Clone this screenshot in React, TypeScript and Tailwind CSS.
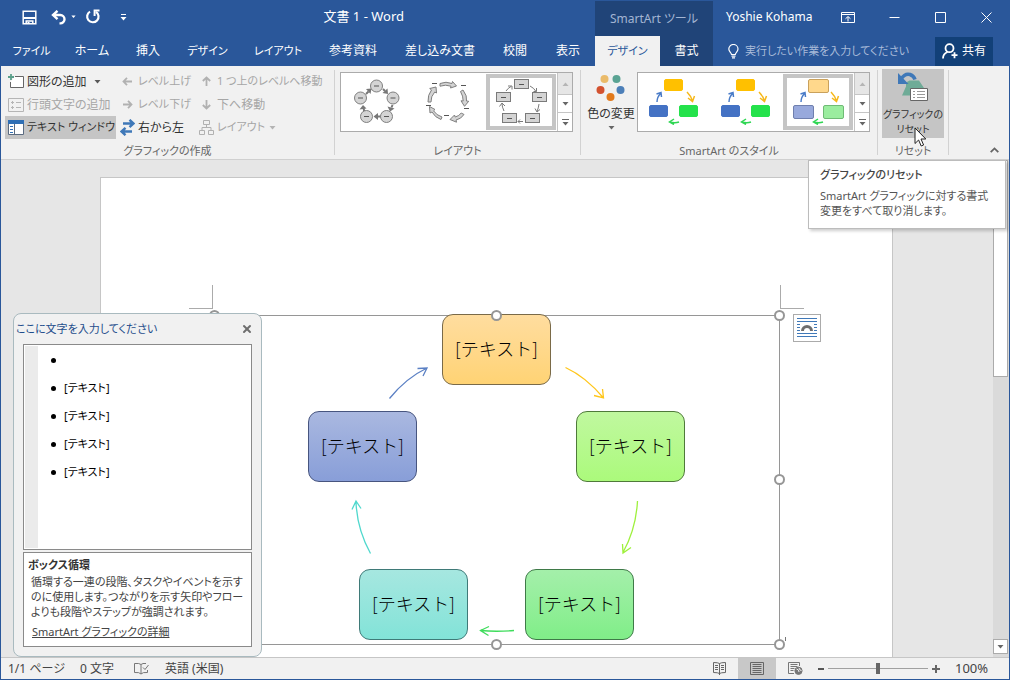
import React, { useState } from 'react';
import { X } from 'lucide-react';
import clsx from 'clsx';

const MAIN_TABS = ['ファイル', 'ホーム', '挿入', 'デザイン', 'レイアウト', '参考資料', '差し込み文書', '校閲', '表示'];
const WIDE_TABS = ['ファイル', 'デザイン', 'レイアウト'];

function Caret({ className }: { className?: string }) {
  return (
    <svg width="7" height="4" viewBox="0 0 7 4" className={clsx('shrink-0', className)} fill="currentColor">
      <path d="M0.5 0h6L3.5 3.5z" />
    </svg>
  );
}

/* ---------- title bar and tabs ---------- */

function QuickAccess() {
  return (
    <div className="flex items-center">
      <button aria-label="上書き保存" className="mr-[14px]">
        <svg width="15" height="15" viewBox="0 0 15 15" fill="none" stroke="#fff" strokeWidth="1.500">
          <path d="M1.200 1.200h12.600v12.600H1.200z" />
          <path d="M1 8h13" strokeWidth="2" />
          <path d="M4.200 14v-3h6.600v3" />
          <path d="M6.500 12V14" strokeWidth="2" />
        </svg>
      </button>
      <button aria-label="元に戻す" className="flex items-center gap-1 mr-[9px]">
        <svg width="16" height="15" viewBox="0 0 16 15" fill="none" stroke="#fff" strokeWidth="2.400">
          <path d="M6.500 0.800L2 5l4.500 4.200" />
          <path d="M2.500 5h6.800a4.200 4.200 0 0 1 0 8.400H8.500" />
        </svg>
        <Caret className="w-[5px]" />
      </button>
      <button aria-label="やり直し" className="mr-[19px]">
        <svg width="16" height="16" viewBox="0 0 16 16" fill="none" stroke="#fff" strokeWidth="2.200">
          <path d="M5 2.600a5.700 5.700 0 1 0 6 0.200" />
          <path d="M14.500 1.600H9.600v5.400" strokeWidth="2" />
        </svg>
      </button>
      <button aria-label="クイック アクセス ツール バーのユーザー設定">
        <svg width="7" height="7" viewBox="0 0 7 7" fill="currentColor">
          <path d="M1 0h5v1H1zM0.500 3h6L3.500 6.500z" />
        </svg>
      </button>
    </div>
  );
}

function Header() {
  const [query, setQuery] = useState('');
  return (
    <header className="flex bg-[#2a579a] text-white">
      <div className="w-[594px] shrink-0">
        <div className="h-[35px] flex items-center justify-between pb-[3px] pl-[21px] pr-[191px]">
          <QuickAccess />
          <h1 className="text-[13px]">文書 1 - Word</h1>
        </div>
        <nav className="h-[30px] grid grid-cols-[61px_60px_52px_67px_74px_76px_98px_52px_54px] items-center text-center">
          {MAIN_TABS.map(tab => (
            <button key={tab} className={clsx('whitespace-nowrap', WIDE_TABS.includes(tab) && 'text-[11px]')}>{tab}</button>
          ))}
        </nav>
      </div>
      <div className="w-[118px] shrink-0 bg-[#204478]">
        <div className="h-[35px] flex items-center justify-center text-[#a3b5d3]">SmartArt ツール</div>
        <nav className="h-[30px] grid grid-cols-[65px_53px]">
          <button className="bg-[#f1f1f1] text-[#2a579a] text-[11px]">デザイン</button>
          <button>書式</button>
        </nav>
      </div>
      <div className="flex-1 min-w-0">
        <div className="h-[35px] flex items-center pb-[3px] pl-[13px]">
          <span className="whitespace-nowrap">Yoshie Kohama</span>
          <div className="ml-auto flex items-center">
            <button aria-label="リボンの表示オプション" className="w-[46px] flex justify-center">
              <svg width="14" height="11" viewBox="0 0 14 11" fill="none" stroke="#fff">
                <path d="M0.500 0.500h13v10H0.500zM0.500 2.500h13M7 9.500V5M4.500 6.800L7 4.500l2.500 2.300" />
              </svg>
            </button>
            <button aria-label="最小化" className="w-[46px] flex justify-center">
              <svg width="11" height="11" viewBox="0 0 11 11" stroke="#fff"><path d="M0.500 5.500h10" /></svg>
            </button>
            <button aria-label="最大化" className="w-[46px] flex justify-center">
              <svg width="11" height="11" viewBox="0 0 11 11" fill="none" stroke="#fff"><path d="M0.500 0.500h10v10H0.500z" /></svg>
            </button>
            <button aria-label="閉じる" className="w-[46px] flex justify-center">
              <svg width="11" height="11" viewBox="0 0 11 11" stroke="#fff"><path d="M0.500 0.500l10 10M10.500 0.500l-10 10" /></svg>
            </button>
          </div>
        </div>
        <div className="h-[30px] flex items-center pl-[15px] pr-4">
          <svg width="11" height="15" viewBox="0 0 11 15" fill="none" stroke="#fff" strokeWidth="1.200" className="shrink-0">
            <path d="M3.500 10.500c0-2-2.700-2.600-2.700-5.400a4.600 4.600 0 0 1 9.200 0c0 2.800-2.700 3.400-2.700 5.400z" />
            <path d="M3.500 12.200h4M4 13.900h3" />
          </svg>
          <input
            aria-label="操作アシスト"
            value={query}
            onChange={e => setQuery(e.target.value)}
            placeholder="実行したい作業を入力してください"
            className="ml-[6px] w-full min-w-0 text-[11px] bg-transparent outline-none placeholder:text-[#a9bbd9]"
          />
          <button className="flex items-center justify-center gap-1 w-[58px] h-[29px] shrink-0 bg-[#124078] whitespace-nowrap">
            <svg width="16" height="16" viewBox="0 0 16 16" fill="none" stroke="#fff" strokeWidth="1.800">
              <circle cx="7.500" cy="5.200" r="4" />
              <path d="M1 15.500c0-3.500 1.800-5.500 4.500-6.500M9.500 12.200h6M12.500 9.200v6" />
            </svg>
            共有
          </button>
        </div>
      </div>
    </header>
  );
}

/* ---------- ribbon ---------- */

interface SmallButtonProps {
  icon: React.ReactNode;
  label: string;
  disabled?: boolean;
  active?: boolean;
  menu?: boolean;
  compact?: boolean;
}

function SmallButton({ icon, label, disabled, active, menu, compact }: SmallButtonProps) {
  return (
    <button
      disabled={disabled}
      className={clsx(
        'flex items-center h-[23px] pl-[3px] whitespace-nowrap',
        disabled ? 'text-[#a6a6a6]' : 'text-[#333]',
        active && 'bg-[#c5c5c5]',
        compact && 'text-[11px]'
      )}
    >
      <span className="w-4 mr-[3px] flex justify-center shrink-0">{icon}</span>
      {label}
      {menu && <Caret className={clsx('opacity-80', compact ? 'ml-1' : 'ml-[7px]')} />}
    </button>
  );
}

function ArrowIcon({ turn }: { turn: string }) {
  return (
    <svg width="11" height="11" viewBox="0 0 11 11" fill="none" stroke="#b1b1b1" strokeWidth="1.800" className={turn}>
      <path d="M1.500 5.500H10M5 1.800L1.500 5.500 5 9.200" />
    </svg>
  );
}

const addShapeIcon = (
  <svg width="16" height="15" viewBox="0 0 16 15" fill="none">
    <path d="M7 2.500h8.500v11H2.500V8" stroke="#666" fill="#fff" />
    <path d="M3 0v6M0 3h6" stroke="#5a9f8a" strokeWidth="1.800" />
  </svg>
);

const addBulletIcon = (
  <svg width="16" height="14" viewBox="0 0 16 14" fill="none" stroke="#b5b5b5">
    <path d="M0.500 0.500h15v13H0.500z" />
    <path d="M3 4.500h3M4.500 3v3M8 4.500h5M3 9.500h3M4.500 8v3M8 9.500h5" />
  </svg>
);

const textPaneIcon = (
  <svg width="16" height="15" viewBox="0 0 16 15">
    <path d="M0.500 0.500h15v14H0.500z" fill="#fff" stroke="#5b6b80" />
    <path d="M0 0h16v4H0z" fill="#2f6fb5" />
    <path d="M6.500 4v11" stroke="#5b6b80" />
    <path d="M2 6.500h3M2 9.500h3M2 12.500h3" stroke="#2f6fb5" />
  </svg>
);

const rightToLeftIcon = (
  <svg width="15" height="17" viewBox="0 0 15 17" fill="none" stroke="#3f78b8" strokeWidth="2.400">
    <path d="M3 4.500h10M9.500 0.800l4 3.700-4 3.700" />
    <path d="M12 12.500H2M5.500 8.800l-4 3.700 4 3.700" />
  </svg>
);

const hierarchyIcon = (
  <svg width="15" height="15" viewBox="0 0 15 15" fill="none" stroke="#b1b1b1">
    <path d="M4.500 0.500h6v4h-6zM0.500 10.500h5v4h-5zM9.500 10.500h5v4h-5zM7.500 4.500v3M3 10.500v-3h9v3" />
  </svg>
);

interface RibbonGroupProps {
  label: string;
  className: string;
  children: React.ReactNode;
}

function RibbonGroup({ label, className, children }: RibbonGroupProps) {
  return (
    <section className={clsx('flex flex-col my-1 border-r border-[#d2d2d2] shrink-0', className)}>
      <div className="flex-1">{children}</div>
      <h2 className="text-center text-[11px] text-[#666] leading-4 h-3">{label}</h2>
    </section>
  );
}

function Gallery({ items, selected, label }: { items: React.ReactNode[]; selected: number; label: string }) {
  return (
    <div className="flex w-[233px] h-[60px] bg-white border border-[#ababab]" role="group" aria-label={label}>
      {items.map((item, i) => (
        <button
          key={i}
          aria-label={`${label} ${i + 1}`}
          aria-pressed={i === selected}
          className={clsx(
            'flex-1 flex items-center justify-center border-4 m-px',
            i === selected ? 'border-[#c5c5c5]' : 'border-transparent'
          )}
        >
          {item}
        </button>
      ))}
      <div className="w-[15px] grid grid-rows-[21px_19px_18px] border-l border-[#c5c5c5] text-[#666]">
        <button aria-label="前へ" disabled className="flex items-center justify-center bg-[#e6e6e6] text-[#b5b5b5]">
          <Caret className="rotate-180" />
        </button>
        <button aria-label="次へ" className="flex items-center justify-center border-y border-[#c5c5c5]">
          <Caret />
        </button>
        <button aria-label="その他" className="flex items-center justify-center">
          <svg width="7" height="7" viewBox="0 0 7 7" fill="currentColor"><path d="M0 0h7v1H0zM0.500 3h6L3.500 6.500z" /></svg>
        </button>
      </div>
    </div>
  );
}

function CircleCycle() {
  const nodes = [[22.5, 7], [39, 19], [32.5, 37.5], [12.5, 37.5], [6.5, 19]];
  return (
    <svg width="46" height="46" viewBox="0 0 46 46" className="shrink-0" stroke="#7f7f7f">
      {nodes.map(([x, y]) => (
        <g key={`${x}-${y}`}>
          <circle cx={x} cy={y} r="6" fill="#d4d4d4" />
          <path d={`M${x - 2.5} ${y}h5`} stroke="#555" />
        </g>
      ))}
      <g fill="#777" stroke="none">
        <path d="M34 15l-0.500-5.500-5 4.500z" />
        <path d="M36 32.500l-2.500-5 7 2z" />
        <path d="M19.500 37.500l4.500-3.500v7z" />
        <path d="M9 26l-3.500 4.500 7-1z" />
        <path d="M17.500 9.500l-5.500 0.500 4.500 5z" />
      </g>
      <path d="M29 10l2 2M38.500 26l-1 2.500M26.500 37.500h-3M9.500 29l0.700 3M12 15l2.500-2.500" stroke="#777" strokeWidth="2" />
    </svg>
  );
}

function ArrowCycle() {
  return (
    <svg width="46" height="44" viewBox="0 0 46 44" className="shrink-0" fill="#d4d4d4" stroke="#7f7f7f">
      <path d="M14 3.500q6-2.500 12 0l0.500-2 4 4.500-6 2 0.500-1.800q-5.500-2-11 0z" />
      <path d="M37 10q4.500 6 3.500 11l2.200 0.300-4.200 5-3.500-5.500 2.200 0.200q0-5-2.700-9.500z" />
      <path d="M38 34.500q-3 4.500-8 5.500l0.500 2.200-6.500-2.700 4.500-4.500 0.700 2q4-1 6-4z" />
      <path d="M15 39.500q-6-2-9-7.500l-2 1-0.500-6.500 5.500 3-1.500 1.300q3 4.500 8.500 6.200z" />
      <path d="M2 22q-0.500-7 3.500-12l-1.800-1.500 6.300-1.500 0.500 6-1.800-1q-4 4.500-3.700 10z" />
      <path d="M6 3.500h5M35 5.500h5M38 28.500h5M18 35.500h5M0 25.500h5" stroke="#555" />
    </svg>
  );
}

function BoxCycle() {
  const boxes = [[19, 0], [37, 13], [30, 34], [7, 34], [1, 13]];
  return (
    <svg width="53" height="46" viewBox="0 0 53 46" className="shrink-0" stroke="#7a7a7a" fill="none">
      {boxes.map(([x, y]) => (
        <g key={`${x}-${y}`}>
          <rect x={x + 0.5} y={y + 0.5} width="14" height="9" fill="#d4d4d4" />
          <path d={`M${x + 5} ${y + 5.5}h5`} stroke="#555" />
        </g>
      ))}
      <path d="M11 12q2-3 5-4.500M13 7h4v3.500M35 7q4 2 6 5.500M38.500 12.500h3V9M44 25q-0.500 4-2 7.500M40 29.500l2 3.500 3-2.500M28 42.500h-5M25 40.500l-2 2 2 2M9 32q-2-4-2-7.500M4.500 27.500L7 24l3 3" />
    </svg>
  );
}

function StyleThumb({ variant }: { variant: 'flat' | 'subtle' | 'soft' }) {
  const soft = variant === 'soft';
  const fills = soft ? ['#ffd88c', '#98a9dc', '#9bed9f'] : ['#ffc000', '#4472c4', '#24e24b'];
  const strokes = soft ? ['#c9a15c', '#6f7fae', '#6fbb75'] : fills;
  return (
    <svg width="54" height="46" viewBox="0 0 54 46" className="shrink-0" fill="none">
      <rect x="17.500" y="0.500" width={soft ? 20 : 18} height={soft ? 13 : 11} rx="1.500" fill={fills[0]} stroke={strokes[0]} />
      <rect x="2.500" y="26.500" width={soft ? 20 : 18} height={soft ? 13 : 11} rx="1.500" fill={fills[1]} stroke={strokes[1]} />
      <rect x="32.500" y="26.500" width={soft ? 20 : 18} height={soft ? 13 : 11} rx="1.500" fill={fills[2]} stroke={strokes[2]} />
      <path d="M10 23q0-5 4-9M9.500 15l4.500-1.500 0.500 4.500" stroke="#4a7cc8" strokeWidth="1.500" />
      <path d="M40 13q4 4 5.500 9M41 19l4.500 3.500 2-5.500" stroke="#f6b81a" strokeWidth="1.500" />
      <path d="M32 43q-4 1.500-9 0M27 40l-4.500 3 4.500 2.500" stroke="#2fd653" strokeWidth="1.500" />
    </svg>
  );
}

function Ribbon() {
  return (
    <div className="flex h-[94px] shrink-0 bg-[#f1f1f1] border-b border-[#d0d0d0]">
      <RibbonGroup label="グラフィックの作成" className="w-[334px]">
        <div className="grid grid-cols-[111px_79px_1fr] pl-1">
          <SmallButton icon={addShapeIcon} label="図形の追加" menu />
          <SmallButton icon={<ArrowIcon turn="rotate-0" />} label="レベル上げ" disabled compact />
          <SmallButton icon={<ArrowIcon turn="rotate-90" />} label="1 つ上のレベルへ移動" disabled compact />
          <SmallButton icon={addBulletIcon} label="行頭文字の追加" disabled />
          <SmallButton icon={<ArrowIcon turn="rotate-180" />} label="レベル下げ" disabled compact />
          <SmallButton icon={<ArrowIcon turn="-rotate-90" />} label="下へ移動" disabled />
          <SmallButton icon={textPaneIcon} label="テキスト ウィンドウ" active compact />
          <SmallButton icon={rightToLeftIcon} label="右から左" />
          <SmallButton icon={hierarchyIcon} label="レイアウト" disabled menu compact />
        </div>
      </RibbonGroup>

      <RibbonGroup label="レイアウト" className="w-[246px]">
        <div className="pt-[2px] pl-[5px]">
          <Gallery label="レイアウト" selected={2} items={[<CircleCycle />, <ArrowCycle />, <BoxCycle />]} />
        </div>
      </RibbonGroup>

      <RibbonGroup label="SmartArt のスタイル" className="w-[297px]">
        <div className="flex pt-[2px] pl-1">
          <button className="w-[52px] flex flex-col items-center text-[#333] whitespace-nowrap">
            <svg width="30" height="30" viewBox="0 0 30 30">
              <circle cx="8.500" cy="7" r="4" fill="#eabb6a" />
              <circle cx="20.500" cy="7" r="4" fill="#5aa393" />
              <circle cx="4.500" cy="18" r="4" fill="#d35230" />
              <circle cx="24.500" cy="18" r="4" fill="#4c7fb8" />
              <circle cx="14.500" cy="25" r="4" fill="#e27a1c" />
            </svg>
            <span className="leading-6">色の変更</span>
            <Caret className="text-[#666]" />
          </button>
          <Gallery
            label="SmartArt のスタイル"
            selected={2}
            items={[<StyleThumb variant="flat" />, <StyleThumb variant="subtle" />, <StyleThumb variant="soft" />]}
          />
        </div>
      </RibbonGroup>

      <RibbonGroup label="リセット" className="w-[71px]">
        <button className="ml-1 -mt-px w-[62px] h-[69px] bg-[#c5c5c5] text-[#333] text-[10px] flex flex-col items-center whitespace-nowrap">
          <svg width="32" height="34" viewBox="0 0 32 34" className="shrink-0">
            <path d="M9 13.500l3.500-2h9.500l6 9H16v6H5l4-9z" fill="#6fab97" />
            <path d="M4 10Q8 4 13 5.500q4 1.500 5 5" fill="none" stroke="#3f78b8" strokeWidth="3.500" />
            <path d="M1 4v11h10.500z" fill="#3f78b8" />
            <path d="M13.500 19.500h17v12h-17z" fill="#fff" stroke="#666" />
            <path d="M16 22.500h2M16 25.500h2M16 28.500h2M20 22.500h8M20 25.500h8M20 28.500h8" stroke="#999" />
          </svg>
          <span className="leading-[15px] pt-1">グラフィックの<br />リセット</span>
        </button>
      </RibbonGroup>

      <button aria-label="リボンを折りたたむ" className="ml-auto self-end mb-[6px] mr-[10px]">
        <svg width="9" height="6" viewBox="0 0 9 6" fill="none" stroke="#666" strokeWidth="1.800"><path d="M0.700 5.200l3.800-3.800 3.800 3.800" /></svg>
      </button>
    </div>
  );
}

/* ---------- document ---------- */

// node positions on the SmartArt canvas
const NODES = [
  { id: 1, place: 'left-[227px] top-[-2px]', fill: 'from-[#ffdd9f] to-[#ffd374] border-[#7a6a48]' },
  { id: 2, place: 'left-[361px] top-[95px]', fill: 'from-[#c0f89f] to-[#abfa7b] border-[#4f7a3a]' },
  { id: 3, place: 'left-[310px] top-[253px]', fill: 'from-[#a4efaa] to-[#80ee88] border-[#3f7a48]' },
  { id: 4, place: 'left-[144px] top-[253px]', fill: 'from-[#a6e7e0] to-[#82e3d8] border-[#3f7a78]' },
  { id: 5, place: 'left-[93px] top-[95px]', fill: 'from-[#aab8e0] to-[#889ed8] border-[#47557f]' },
];

const HANDLES = [
  'left-[-6px] top-[-6px]',
  'left-[276px] top-[-6px]',
  'right-[-6px] top-[-6px]',
  'right-[-6px] top-[158px]',
  'left-[276px] bottom-[-6px]',
  'right-[-6px] bottom-[-6px]',
];

function SmartArt() {
  return (
    <div className="absolute left-[113px] top-[137px] w-[566px] h-[330px] border border-[#969696]">
      <svg className="absolute left-0 top-0 overflow-visible" width="564" height="328" viewBox="0 0 564 328" fill="none" strokeWidth="1.300">
        <path d="M174.500 82.500Q191 62 212 52M202.500 52.500L212 52l-4 8" stroke="#5b80c4" />
        <path d="M350.500 51.500Q371 61 388.500 82M379 79.500l9.500 2.500-1-9" stroke="#ffc61a" />
        <path d="M422.500 185Q421 213 408 236.500M407.500 228l0.500 9 8-5.500" stroke="#9ef03c" />
        <path d="M299 314.500Q281 316 265.500 314.500M274 310.500l-8.500 4 8 5" stroke="#3fdc5c" />
        <path d="M155.500 237.500Q142 213 141 186M137 193.500l4-8.500 5 7.500" stroke="#4fd8cd" />
      </svg>
      {NODES.map(node => (
        <div
          key={node.id}
          className={clsx(
            "absolute w-[109px] h-[71px] rounded-[11px] border bg-linear-to-b flex items-center justify-center pb-1 text-lg font-light text-black whitespace-nowrap font-['Noto_Sans_CJK_JP',sans-serif] [font-feature-settings:normal]",
            node.place,
            node.fill
          )}
        >
          [テキスト]
        </div>
      ))}
      {HANDLES.map(place => (
        <span key={place} className={clsx('absolute size-[11px] rounded-full border-2 border-[#969696] bg-white', place)} />
      ))}
    </div>
  );
}

function Page() {
  return (
    <div className="relative h-full bg-white border border-b-0 border-[#c6c6c6]">
      {/* crop marks of the text area */}
      <span className="absolute left-[88px] top-[107px] w-6 h-6 border-r border-b border-[#ababab]" />
      <span className="absolute left-[679px] top-[107px] w-6 h-6 border-l border-b border-[#ababab]" />
      <span className="absolute left-[684px] top-[459px] w-px h-1 bg-[#777]" />
      <SmartArt />
      <button aria-label="レイアウト オプション" className="absolute left-[692px] top-[136px] size-7 bg-white border border-[#ababab] flex items-center justify-center">
        <svg width="20" height="20" viewBox="0 0 20 20" fill="none" stroke="#3f78b8">
          <path d="M0 0.500h20M0 3.500h20M0 15.500h20M0 18.500h20M0 6.500h3M0 9.500h3M0 12.500h3M17 6.500h3M17 9.500h3M17 12.500h3" />
          <path d="M5.500 13a4.500 4.500 0 0 1 9 0" stroke="#6e6e6e" strokeWidth="3" />
        </svg>
      </button>
    </div>
  );
}

function TextPane() {
  const items = ['', '[テキスト]', '[テキスト]', '[テキスト]', '[テキスト]'];
  return (
    <aside className="absolute left-3 top-[153px] w-[249px] h-[344px] bg-[#f1f1f1] border border-[#a9babf] rounded-lg flex flex-col px-[9px] pb-[9px] text-[11px]">
      <div className="flex items-center justify-between h-[30px] -ml-[7px] shrink-0">
        <h2 className="text-[#1f4e8c]">ここに文字を入力してください</h2>
        <button aria-label="閉じる" className="-mr-px text-[#6e6e6e]"><X size={12} strokeWidth={4} /></button>
      </div>
      <div className="flex flex-1 bg-white border border-[#8a8a8a] p-px">
        <div className="w-[13px] bg-[#ebebeb]" />
        <ul className="pl-[13px] text-black">
          {items.map((item, i) => (
            <li key={i} className="flex items-center h-7 gap-2 leading-4">
              <span className="size-[5px] rounded-full bg-black" />
              {item}
            </li>
          ))}
        </ul>
      </div>
      <div className="mt-[2px] h-[95px] shrink-0 bg-white border border-[#8a8a8a] px-1 pt-1 text-[#444] leading-[15px] whitespace-nowrap">
        <h3 className="font-bold text-[#333]">ボックス循環</h3>
        <p className="pl-[3px] pt-[2px]">
          循環する一連の段階、タスクやイベントを示す<br />
          のに使用します。つながりを示す矢印やフロー<br />
          よりも段階やステップが強調されます。
        </p>
        <a href="#details" className="block ml-1 mt-[5px] underline">SmartArt グラフィックの詳細</a>
      </div>
    </aside>
  );
}

function ScrollBar() {
  return (
    <div className="w-4 shrink-0 flex flex-col bg-[#dadada] pb-[3px]">
      <div className="h-[217px] mr-px bg-white border border-[#ababab]" />
      <button aria-label="下へスクロール" className="mt-auto mr-px h-[15px] bg-white border border-[#ababab] flex items-center justify-center text-[#666]">
        <Caret />
      </button>
    </div>
  );
}

function ResetTooltip() {
  return (
    <div role="tooltip" className="absolute right-[3px] top-0 w-[198px] h-[69px] bg-white border border-[#bcbcbc] shadow-[2px_2px_3px_rgba(0,0,0,0.2)] px-[11px] pt-[6px] text-[11px] text-[#555] leading-[15px] whitespace-nowrap">
      <h3 className="font-medium text-[#444]">グラフィックのリセット</h3>
      <p className="pt-[6px]">
        SmartArt グラフィックに対する書式<br />
        変更をすべて取り消します。
      </p>
    </div>
  );
}

/* ---------- status bar ---------- */

function StatusBar() {
  const [zoom, setZoom] = useState(50);
  return (
    <footer className="flex items-center h-[22px] shrink-0 bg-[#f1f1f1] border-t border-[#c6c6c6] text-[#444] whitespace-nowrap">
      <span className="pl-[7px] w-[79px]">1/1 ページ</span>
      <span className="w-[54px]">0 文字</span>
      <button aria-label="文章校正" className="w-[31px]">
        <svg width="15" height="13" viewBox="0 0 15 13" fill="none" stroke="#777">
          <path d="M7 2.500Q5.500 1 0.500 1.500v9q5-0.500 6.500 1.500V2.500zQ8.500 1 12 1.500M7 12q1.500-2 6.500-1.500V8M9 5.500l2 2 3.500-4.500" />
        </svg>
      </button>
      <span>英語 (米国)</span>

      <div className="ml-auto flex items-center h-full">
        <button aria-label="閲覧モード" className="w-[38px] h-full flex items-center justify-center">
          <svg width="13" height="13" viewBox="0 0 13 13" fill="none" stroke="#666">
            <path d="M6.500 1.500Q5 0.500 0.500 0.500v10q4.500 0 6 1 1.500-1 6-1v-10q-4.500 0-6 1zV13" />
            <path d="M2 3.500h3M2 5.500h3M2 7.500h3M8 3.500h3M8 5.500h3M8 7.500h3" />
          </svg>
        </button>
        <button aria-label="印刷レイアウト" aria-pressed className="w-[38px] h-full bg-[#c8c8c8] flex items-center justify-center">
          <svg width="14" height="13" viewBox="0 0 14 13" fill="none" stroke="#666">
            <path d="M0.500 0.500h13v12H0.500zM2.500 2.500h9M2.500 4.500h9M2.500 6.500h9M2.500 8.500h9M2.500 10.500h9" />
          </svg>
        </button>
        <button aria-label="Web レイアウト" className="w-[38px] h-full flex items-center justify-center">
          <svg width="15" height="13" viewBox="0 0 15 13" fill="none" stroke="#777">
            <path d="M6 11.500H0.500V0.500h11V4M2.500 2.500h7M2.500 4.500h7M2.500 6.500h4M2.500 8.500h3" />
            <circle cx="10.500" cy="8.800" r="3.600" fill="#777" />
            <path d="M8.500 7l2 1 0.500 2M11 6l1 2 1.500 0.500" stroke="#f1f1f1" />
          </svg>
        </button>
        <button aria-label="縮小" className="w-[14px] flex justify-center">
          <svg width="6" height="2" viewBox="0 0 6 2"><path d="M0 0h6v2H0z" fill="#555" /></svg>
        </button>
        <input
          type="range"
          aria-label="ズーム"
          value={zoom}
          onChange={e => setZoom(Number(e.target.value))}
          className="w-[100px] h-3 appearance-none bg-transparent bg-[linear-gradient(#a0a0a0,#a0a0a0)] bg-[length:100%_1px] bg-center bg-no-repeat [&::-webkit-slider-thumb]:appearance-none [&::-webkit-slider-thumb]:w-1 [&::-webkit-slider-thumb]:h-[11px] [&::-webkit-slider-thumb]:bg-[#666]"
        />
        <button aria-label="拡大" className="w-4 flex justify-center">
          <svg width="8" height="8" viewBox="0 0 8 8"><path d="M0 3h3V0h2v3h3v2H5v3H3V5H0z" fill="#666" /></svg>
        </button>
        <span className="w-[65px] pl-[11px] text-[13px]">100%</span>
      </div>
    </footer>
  );
}

export default function App() {
  return (
    <div className="relative h-screen flex flex-col overflow-hidden border border-[#2a579a] bg-[#e6e6e6] text-xs font-['Noto_Sans','Noto_Sans_CJK_JP',sans-serif] [font-feature-settings:'palt']">
      <Header />
      <Ribbon />
      <main className="relative flex flex-1 min-h-0">
        <div className="flex-1 min-w-0 pl-[99px] pr-[100px] pt-[17px] overflow-hidden">
          <Page />
        </div>
        <ScrollBar />
        <TextPane />
        <ResetTooltip />
      </main>
      <StatusBar />
      {/* mouse pointer over the reset button */}
      <svg className="absolute right-[82px] top-[126px]" width="13" height="21" viewBox="0 0 13 21">
        <path d="M1 1v15.500l3.600-3.500 2.600 6 2.400-1-2.600-6h4.800z" fill="#fff" stroke="#222" />
      </svg>
    </div>
  );
}
